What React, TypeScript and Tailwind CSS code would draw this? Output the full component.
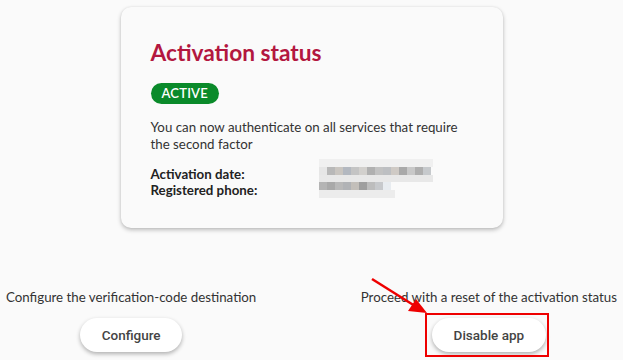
import React from "react"

const blurA = ["#e6e6e6", "#b8b8b8", "#c9c5c0", "#b3b8c0", "#c4c4c4", "#d2d0cd", "#b0b0b0", "#c2c2c2", "#bdbfc2", "#cfcac5", "#a9a9a9", "#c8c8c8", "#aeaeae", "#c6c9cc"]
const blurB = ["#b4b4b4", "#a9a9a9", "#b9b9b9", "#b1b3b6", "#c3bfba", "#9f9f9f", "#bdbdbd", "#c7c9cc", "#e8ecf0"]

const Blur: React.FC = () => (
    <svg width="116" height="40" viewBox="0 0 116 40">
        <rect x="0" y="0" width="116" height="40" fill="#fafafa" />
        <rect x="0" y="0" width="114" height="8" fill="#f0f0f0" />
        {blurA.map((c, i) => (
            <rect key={i} x={i * 8} y={8} width="8" height="8" fill={c} />
        ))}
        <rect x="0" y="16" width="114" height="7" fill="#e8e8e8" />
        {blurB.map((c, i) => (
            <rect key={i} x={i * 8} y={23} width="8" height="8" fill={c} />
        ))}
        <rect x="0" y="31" width="76" height="8" fill="#ececec" />
    </svg>
)

const App: React.FC = () => {
    return (
        <div className="relative w-[623px] h-[360px] bg-[#fafafa] font-['Lato',sans-serif] text-[#333] overflow-hidden">
            <div className="mx-auto mt-[7px] w-[382px] h-[221px] rounded-[10px] bg-[#fafafa] shadow-[0_2px_4px_rgba(0,0,0,0.25),0_0_2px_rgba(0,0,0,0.08)] px-[30px] pt-[32px]">
                <h1 className="text-[22.7px] leading-[28px] font-bold text-[#b3173f]">Activation status</h1>
                <div className="mt-[16px] inline-flex items-center h-[21px] px-[11px] rounded-full bg-[#0a8a2a] text-white text-[13px] font-semibold tracking-[0.2px]">
                    ACTIVE
                </div>
                <p className="mt-[15px] text-[13.3px] leading-[17px]">
                    You can now authenticate on all services that require the second factor
                </p>
                <div className="mt-[13px] flex">
                    <div className="w-[168px] text-[13.3px] leading-[16px] font-bold text-[#222]">
                        <div>Activation date:</div>
                        <div>Registered phone:</div>
                    </div>
                    <div className="-mt-[7px]">
                        <Blur />
                    </div>
                </div>
            </div>

            <div className="mt-[61px] flex justify-between px-[6px] text-[13.3px]">
                <div className="flex flex-col items-center">
                    <p className="leading-[17px]">Configure the verification-code destination</p>
                    <button className="mt-[12px] h-[34px] w-[102px] rounded-full bg-white shadow-[0_2px_4px_rgba(0,0,0,0.3)] font-['Roboto',sans-serif] font-medium text-[13.5px] text-[#444]">
                        Configure
                    </button>
                </div>
                <div className="flex flex-col items-center">
                    <p className="leading-[17px]">Proceed with a reset of the activation status</p>
                    <div className="relative mt-[12px]">
                        <button className="h-[34px] w-[114px] rounded-full bg-white shadow-[0_2px_4px_rgba(0,0,0,0.3)] font-['Roboto',sans-serif] font-medium text-[13.5px] text-[#444]">
                            Disable app
                        </button>
                        <div className="absolute -left-[7px] -top-[5px] -right-[3px] -bottom-[5px] border-2 border-[#ee0000] pointer-events-none" />
                    </div>
                </div>
            </div>

            <svg className="absolute left-0 top-0 pointer-events-none" width="623" height="360" viewBox="0 0 623 360">
                <line x1="372" y1="279" x2="415" y2="306" stroke="#ee0000" strokeWidth="2.5" />
                <polygon points="427,313 408,311 416,299" fill="#ee0000" />
            </svg>
        </div>
    )
}

export default App
